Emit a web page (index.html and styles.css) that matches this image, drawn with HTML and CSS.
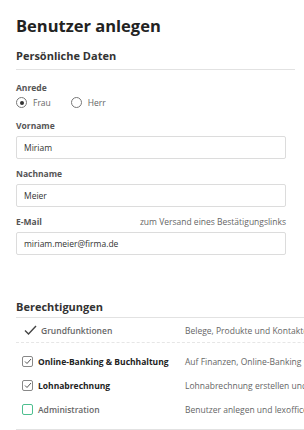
FILE: index.html
```html
<!DOCTYPE html>
<html lang="de">
<head>
    <meta charset="UTF-8">
    <meta name="viewport" content="width=device-width, initial-scale=1.0">
    <title>Benutzer anlegen</title>
    <link rel="stylesheet" href="styles.css">
</head>
<body>

    <div class="page">
        <h1>Benutzer anlegen</h1>

        <h2 class="section-title">Persönliche Daten</h2>

        <div class="field">
            <span class="label">Anrede</span>
            <div class="radios">
                <label class="radio"><span class="dot checked"></span>Frau</label>
                <label class="radio"><span class="dot"></span>Herr</label>
            </div>
        </div>

        <div class="field">
            <label class="label" for="vorname">Vorname</label>
            <input type="text" id="vorname" value="Miriam">
        </div>

        <div class="field">
            <label class="label" for="nachname">Nachname</label>
            <input type="text" id="nachname" value="Meier">
        </div>

        <div class="field">
            <div class="label-row">
                <label class="label" for="email">E-Mail</label>
                <span class="hint">zum Versand eines Bestätigungslinks</span>
            </div>
            <input type="text" id="email" value="miriam.meier@firma.de">
        </div>

        <h2 class="section-title rights-title">Berechtigungen</h2>

        <div class="rights">
            <div class="right basic">
                <div class="name">
                    <svg class="tick" width="13" height="10" viewBox="0 0 13 10"><path d="M1 5.5 L4.5 9 L12 1" fill="none" stroke="#444" stroke-width="1.4"/></svg>
                    Grundfunktionen
                </div>
                <div class="desc">Belege, Produkte und Kontakte verwalten</div>
            </div>
            <div class="right">
                <div class="name strong">
                    <span class="box"><svg width="8" height="7" viewBox="0 0 8 7"><path d="M1 3.5 L3 5.5 L7 1" fill="none" stroke="#555" stroke-width="1"/></svg></span>
                    Online-Banking &amp; Buchhaltung
                </div>
                <div class="desc">Auf Finanzen, Online-Banking und Buchhaltung zugreifen</div>
            </div>
            <div class="right">
                <div class="name strong">
                    <span class="box"><svg width="8" height="7" viewBox="0 0 8 7"><path d="M1 3.5 L3 5.5 L7 1" fill="none" stroke="#555" stroke-width="1"/></svg></span>
                    Lohnabrechnung
                </div>
                <div class="desc">Lohnabrechnung erstellen und verwalten</div>
            </div>
            <div class="right">
                <div class="name">
                    <span class="box empty"></span>
                    Administration
                </div>
                <div class="desc">Benutzer anlegen und lexoffice verwalten</div>
            </div>
        </div>
    </div>

</body>
</html>
```

FILE: styles.css
```css
body {
    margin: 0;
    font-family: 'Open Sans', sans-serif;
    background: #fff;
    color: #333;
    overflow: hidden;
}

.page {
    padding: 14px 0 0 16px;
}

h1 {
    margin: 0;
    font-size: 16.5px;
    line-height: 24px;
    font-weight: 700;
    color: #222;
}

.section-title {
    margin: 10px 9px 0 0;
    padding-bottom: 5px;
    font-size: 11px;
    line-height: 16px;
    font-weight: 700;
    color: #333;
    border-bottom: 1px solid #e2e2e2;
}

.field {
    margin-right: 18px;
    margin-top: 9px;
}

.field:first-of-type {
    margin-top: 12px;
}

.label {
    display: block;
    font-size: 8.5px;
    line-height: 12px;
    font-weight: 700;
    color: #555;
    margin-bottom: 4px;
}

.label-row {
    display: flex;
    justify-content: space-between;
    align-items: baseline;
}

.hint {
    font-size: 8.5px;
    line-height: 12px;
    color: #666;
}

.radios {
    display: flex;
    gap: 20px;
    margin-top: -1px;
    padding-bottom: 3px;
}

.radio {
    display: flex;
    align-items: center;
    gap: 6px;
    font-size: 8.5px;
    color: #666;
}

.dot {
    width: 9px;
    height: 9px;
    border: 1px solid #777;
    border-radius: 50%;
    position: relative;
}

.dot.checked::after {
    content: "";
    position: absolute;
    left: 2.5px;
    top: 2.5px;
    width: 4px;
    height: 4px;
    border-radius: 50%;
    background: #333;
}

input {
    display: block;
    box-sizing: border-box;
    width: 100%;
    height: 23px;
    padding: 0 7px;
    font-family: 'Open Sans', sans-serif;
    font-size: 8.5px;
    color: #333;
    border: 1px solid #dcdcdc;
    border-radius: 2px;
    outline: none;
}

.rights-title {
    margin: 44px 0 0 0;
    width: 320px;
    padding-bottom: 2px;
}

.rights {
    width: 360px;
    border-bottom: 1px solid #e2e2e2;
    padding-bottom: 8px;
}

.right {
    display: grid;
    grid-template-columns: 169px 1fr;
    align-items: center;
    height: 24px;
    font-size: 8.5px;
}

.right.basic {
    height: 24px;
    margin-bottom: 6px;
    border-bottom: 1px dashed #e6e6e6;
}

.name {
    display: flex;
    align-items: center;
    gap: 5px;
    padding-left: 6px;
    font-weight: 600;
    color: #666;
    white-space: nowrap;
}

.basic .name {
    padding-left: 8px;
    gap: 4px;
}

.name.strong {
    font-weight: 700;
    color: #222;
}

.box {
    display: inline-flex;
    align-items: center;
    justify-content: center;
    box-sizing: border-box;
    width: 11px;
    height: 11px;
    border: 1px solid #888;
    border-radius: 2px;
}

.box.empty {
    border-color: #4dbf8f;
}

.desc {
    color: #666;
    white-space: nowrap;
}
```
